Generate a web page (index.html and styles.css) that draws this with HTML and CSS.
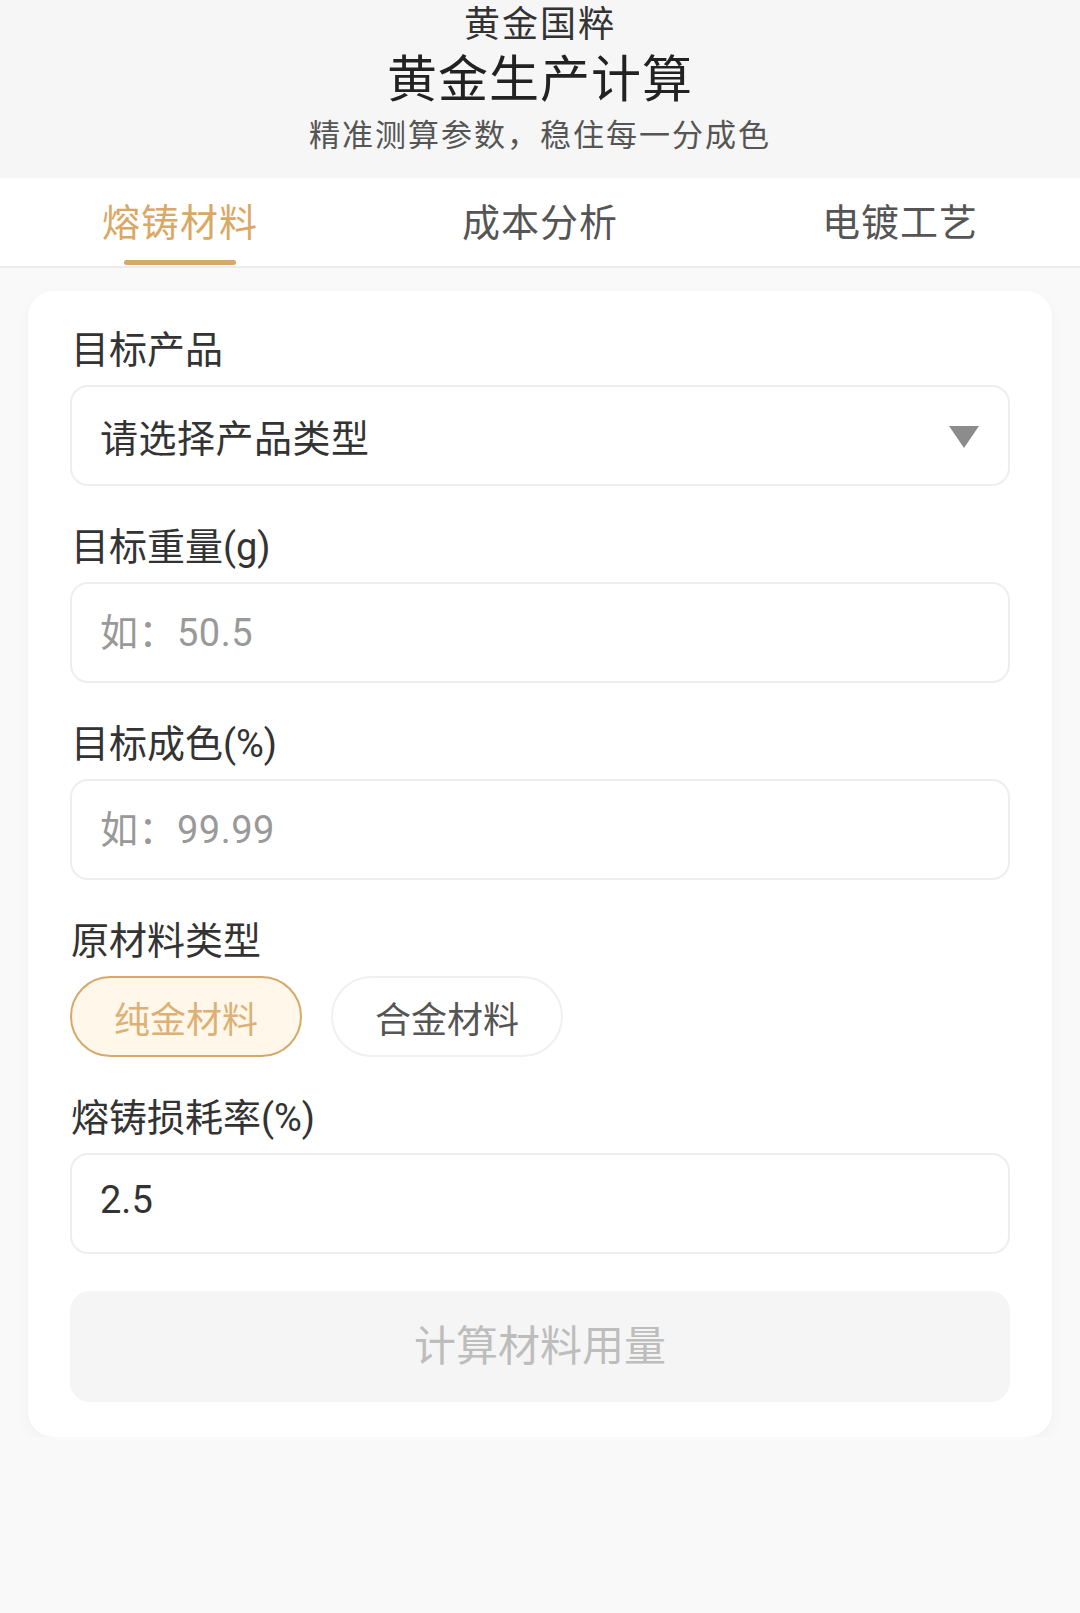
FILE: index.html
```html
<!DOCTYPE html>
<html lang="zh-CN">
<head>
<meta charset="utf-8">
<title>黄金生产计算</title>
<link rel="stylesheet" href="styles.css">
</head>
<body>
<header class="header">
  <div class="brand">黄金国粹</div>
  <h1 class="title">黄金生产计算</h1>
  <div class="subtitle">精准测算参数，稳住每一分成色</div>
</header>
<nav class="tabs">
  <div class="tab active">熔铸材料</div>
  <div class="tab">成本分析</div>
  <div class="tab">电镀工艺</div>
</nav>
<main class="card">
  <div class="field">
    <div class="label">目标产品</div>
    <div class="control select">
      <span class="select-text">请选择产品类型</span>
      <svg class="caret" width="30" height="22" viewBox="0 0 30 22"><polygon points="0,0 30,0 15,22" fill="#8c8c8c"/></svg>
    </div>
  </div>
  <div class="field">
    <div class="label">目标重量(g)</div>
    <div class="control input"><span class="placeholder">如：50.5</span></div>
  </div>
  <div class="field">
    <div class="label">目标成色(%)</div>
    <div class="control input"><span class="placeholder">如：99.99</span></div>
  </div>
  <div class="field">
    <div class="label">原材料类型</div>
    <div class="pills">
      <div class="pill active">纯金材料</div>
      <div class="pill">合金材料</div>
    </div>
  </div>
  <div class="field">
    <div class="label">熔铸损耗率(%)</div>
    <div class="control input"><span class="value">2.5</span></div>
  </div>
  <div class="button">计算材料用量</div>
</main>
</body>
</html>
```
FILE: styles.css
```css
* { box-sizing: border-box; }
html, body {
  margin: 0;
  padding: 0;
  background: #f9f9f9;
  font-family: "Roboto", "Noto Sans CJK SC", sans-serif;
  color: #333;
}
.header {
  background: #f6f6f6;
  text-align: center;
  padding-top: 2px;
  padding-bottom: 18px;
}
.brand {
  font-size: 36px;
  line-height: 46px;
  letter-spacing: 2px;
  color: #333;
}
.title {
  margin: 0;
  font-size: 50px;
  line-height: 64px;
  font-weight: 400;
  letter-spacing: 1px;
  color: #222;
}
.subtitle {
  font-size: 31px;
  line-height: 48px;
  letter-spacing: 2px;
  color: #555;
}
.tabs {
  display: flex;
  background: #fff;
  height: 90px;
  border-bottom: 2px solid #ebebeb;
}
.tab {
  flex: 1;
  position: relative;
  display: flex;
  align-items: center;
  justify-content: center;
  padding-bottom: 6px;
  font-size: 38px;
  letter-spacing: 1px;
  color: #555;
}
.tab.active { color: #d9a865; }
.tab.active::after {
  content: "";
  position: absolute;
  left: 50%;
  bottom: 1px;
  width: 112px;
  margin-left: -56px;
  height: 5px;
  border-radius: 3px;
  background: #d6a86a;
}
.card {
  margin: 23px 28px 0;
  background: #fff;
  border-radius: 26px;
  padding: 35px 42px 35px;
  box-shadow: 0 6px 16px rgba(0,0,0,0.035);
}
.field { margin-bottom: 37px; }
.label {
  font-size: 38px;
  line-height: 48px;
  margin-bottom: 11px;
  color: #333;
  padding-left: 1px;
}
.control {
  height: 101px;
  border: 2px solid #eeeeee;
  border-radius: 18px;
  display: flex;
  align-items: center;
  padding: 0 29px 0 28px;
  font-size: 38px;
}
.control.input { padding-bottom: 7px; }
.select { justify-content: space-between; }
.select-text { color: #333; font-size: 38px; letter-spacing: 0.5px; }
.caret { display: block; margin-top: 2px; }
.placeholder { color: #999; letter-spacing: 0.5px; }
.value { color: #333; }
.pills {
  display: flex;
  gap: 29px;
}
.pill {
  width: 232px;
  height: 81px;
  border-radius: 41px;
  border: 2px solid #f0f0f0;
  display: flex;
  align-items: center;
  justify-content: center;
  font-size: 36px;
  color: #555;
  background: #fff;
}
.pill.active {
  border-color: #d6a86a;
  background: #fff8ea;
  color: #ddb075;
}
.button {
  height: 111px;
  border-radius: 20px;
  background: #f5f5f5;
  display: flex;
  align-items: center;
  justify-content: center;
  padding-bottom: 9px;
  font-size: 42px;
  color: #bdbdbd;
}
```
